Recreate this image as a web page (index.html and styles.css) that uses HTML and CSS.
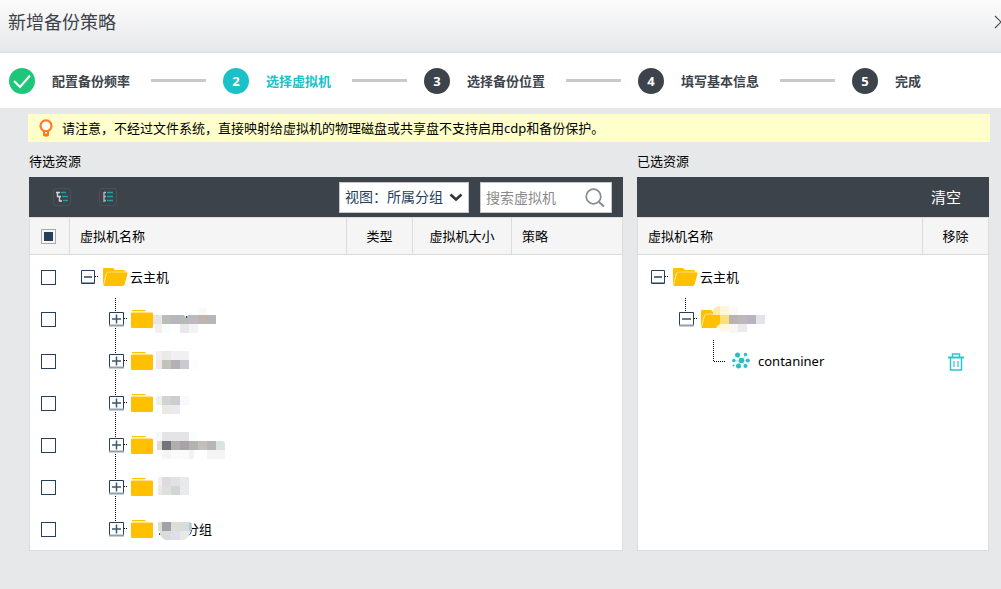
FILE: index.html
```html
<!DOCTYPE html>
<html lang="zh-CN">
<head>
<meta charset="utf-8">
<meta name="viewport" content="width=device-width, initial-scale=1">
<title>新增备份策略</title>
<link rel="stylesheet" href="styles.css">
</head>
<body>
<svg class="defs" aria-hidden="true">
  <symbol id="folder" viewBox="0 0 22 18"><path d="M1 .5h13.500" stroke="#ffc000"/><path d="M1 1.500h14v1H1z" fill="#ffe28a"/><path d="M0 3.500q0-1 1-1h20q1 0 1 1V17q0 1-1 1H1q-1 0-1-1z" fill="#ffc000"/><path d="M1 2.500h20" stroke="#ffe28a"/></symbol>
  <symbol id="folder-open" viewBox="0 0 25 18"><path d="M0 1q0-1 1-1h9l2 2h9q1 0 1 1v2H5q-2 0-2.500 2L.5 17H0z" fill="#ffc000"/><path d="M5.500 4H23q2 0 1.500 2l-3 10.500Q21 18 19.500 18H.5L3.500 6Q4 4 5.500 4z" fill="#ffc000"/><path d="M.7 16 3.300 6Q3.800 4 5.500 4H24" fill="none" stroke="#ffe08a"/></symbol>
  <symbol id="root" viewBox="0 0 17 42"><path d="M.5 14.500h13v13H.5z" fill="#fff" stroke="#24405a"/><path d="M1 26.500h12" stroke="#8fa0ae"/><path d="M3 21h8" stroke="#5c7385" stroke-width="2"/><path d="M14 20.500h3" stroke="#000" stroke-dasharray="1 1"/></symbol>
  <symbol id="box" viewBox="0 0 19 42"><path d="M.5 14.500h14v13H.5z" fill="#fff" stroke="#24405a"/><path d="M0 27.500h15" stroke="#8fa0ae" stroke-width="2"/><path d="M3 21h9" stroke="#3c566b" stroke-width="1.500"/><path d="M15 20.500h4" stroke="#000" stroke-dasharray="1 1"/></symbol>
  <symbol id="plus" viewBox="0 0 19 42"><use href="#box"/><path d="M7.500 16.500v9" stroke="#3c566b" stroke-width="1.500"/><path d="M6.500 0v14" stroke="#000" stroke-dasharray="1 1"/></symbol>
  <symbol id="plus-more" viewBox="0 0 19 42"><use href="#plus"/><path d="M6.500 30v12" stroke="#000" stroke-dasharray="1 1"/></symbol>
  <symbol id="minus" viewBox="0 0 19 42"><use href="#box"/><path d="M6.500 0v14" stroke="#000" stroke-dasharray="1 1"/></symbol>
</svg>

<header class="titlebar">
  <h1>新增备份策略</h1>
  <button class="close" type="button" aria-label="关闭"><svg width="14" height="14" viewBox="0 0 14 14"><path d="m1 1 12 12M13 1 1 13" stroke="#4a4f55" stroke-width="1.200"/></svg></button>
</header>

<ol class="steps">
  <li class="step"><span class="dot done"><svg width="26" height="26" viewBox="0 0 26 26"><path d="m5 13 6 6L21 7.500" fill="none" stroke="#fff" stroke-width="2"/></svg></span><span>配置备份频率</span></li>
  <li class="step current" aria-current="step"><span class="dot">2</span><span>选择虚拟机</span></li>
  <li class="step"><span class="dot">3</span><span>选择备份位置</span></li>
  <li class="step"><span class="dot">4</span><span>填写基本信息</span></li>
  <li class="step"><span class="dot">5</span><span>完成</span></li>
</ol>

<main>
  <p class="notice">
    <svg width="14" height="18" viewBox="0 0 14 18"><circle cx="7" cy="6.800" r="5.500" fill="#fff" stroke="#ff7a1a" stroke-width="2.200"/><path d="M4 11.500h6v5q0 1-3 1.200Q4 17.500 4 16.500z" fill="#ff7a1a"/><path d="M6 13h2v1.500H6z" fill="#fff"/></svg>
    <span>请注意，不经过文件系统，直接映射给虚拟机的物理磁盘或共享盘不支持启用cdp和备份保护。</span>
  </p>

  <div class="panels">
    <section class="panel available">
      <h2>待选资源</h2>
      <div class="toolbar">
        <button class="tool" type="button" aria-label="展开全部"><svg width="12" height="12" viewBox="0 0 12 12"><path d="M0 1.500h4M1.500 1v4.500H5M3.500 5v5H6" fill="none" stroke="#d5d8da" stroke-width="1.400"/><path d="M5 1.500h5M6 5.500h6M7 9.500h5" stroke="#17a5a8" stroke-width="1.500"/></svg></button>
        <button class="tool" type="button" aria-label="收起全部"><svg width="12" height="12" viewBox="0 0 12 12"><path d="M2 1v10M2 1.500h2M2 5.500h2M2 9.500h2" fill="none" stroke="#aeb4b8" stroke-width="1.400"/><path d="M5 1.500h6M5 5.500h6M5 9.500h6" stroke="#17a5a8" stroke-width="1.500"/></svg></button>
        <div class="field view">
          <select aria-label="视图"><option>视图：所属分组</option></select>
          <svg width="14" height="9" viewBox="0 0 14 9"><path d="m1.500 1.500 5.500 5 5.500-5" fill="none" stroke="#333" stroke-width="2.500"/></svg>
        </div>
        <div class="field search">
          <input type="text" placeholder="搜索虚拟机" aria-label="搜索虚拟机">
          <svg width="20" height="20" viewBox="0 0 20 20"><circle cx="8.500" cy="8.500" r="7.300" fill="none" stroke="#858c92" stroke-width="1.700"/><path d="m14 14 5 4.500" stroke="#858c92" stroke-width="2"/></svg>
        </div>
      </div>
      <div class="grid">
        <table>
          <colgroup><col class="c-check"><col class="c-name"><col class="c-type"><col class="c-size"><col></colgroup>
          <thead><tr><th class="check"><input class="partial" type="checkbox" aria-label="全选"></th><th>虚拟机名称</th><th class="mid">类型</th><th class="mid">虚拟机大小</th><th>策略</th></tr></thead>
          <tbody>
            <tr><td class="check"><input type="checkbox" aria-label="选择云主机"></td><td colspan="4"><div class="node"><button type="button" aria-label="收起"><svg width="17" height="42"><use href="#root"/></svg></button><svg class="open" width="25" height="18"><use href="#folder-open"/></svg><span class="name">云主机</span></div></td></tr>
            <tr><td class="check"><input type="checkbox" aria-label="选择分组"></td><td colspan="4"><div class="node child"><button type="button" aria-label="展开"><svg width="19" height="42"><use href="#plus-more"/></svg></button><svg class="closed" width="22" height="18"><use href="#folder"/></svg><svg width="76" height="42"><path d="M0 17h9v9H0z" fill="#e8e6e4"/><path d="M9 17h9v9H9z" fill="#bcbcb6"/><path d="M18 17h9v9h-9z" fill="#b8b4c0"/><path d="M27 17h9v9h-9z" fill="#b4bcb8"/><path d="M36 17h9v9h-9z" fill="#bcbac0"/><path d="M45 17h9v9h-9z" fill="#c0b4ac"/><path d="M54 17h9v9h-9z" fill="#b8b4be"/><path d="M2 26h7v9H2z" fill="#f4efee"/><path d="M9 26h9v9H9z" fill="#f8fdfe"/><path d="M27 26h9v9h-9z" fill="#e8e8ea"/><path d="M36 26h9v9h-9z" fill="#f4f2f5"/><path d="M45 10h9v7h-9z" fill="#fafafa"/><path d="M31 17h4l-2 3z" fill="#fff"/><path d="M33 18h1v2h-1z" fill="#238"/></svg></div></td></tr>
            <tr><td class="check"><input type="checkbox" aria-label="选择分组"></td><td colspan="4"><div class="node child"><button type="button" aria-label="展开"><svg width="19" height="42"><use href="#plus-more"/></svg></button><svg class="closed" width="22" height="18"><use href="#folder"/></svg><svg width="76" height="42"><path d="M3 11h6v9H3z" fill="#f3eff0"/><path d="M9 11h9v9H9z" fill="#eaebe8"/><path d="M18 11h18v9H18z" fill="#f0f0f2"/><path d="M3 20h6v9H3z" fill="#efe8ea"/><path d="M9 20h9v9H9z" fill="#bfc3ba"/><path d="M18 20h9v9h-9z" fill="#b4b0b6"/><path d="M27 20h9v9h-9z" fill="#cbcad2"/><path d="M36 20h9v9h-9z" fill="#fcfefe"/></svg></div></td></tr>
            <tr><td class="check"><input type="checkbox" aria-label="选择分组"></td><td colspan="4"><div class="node child"><button type="button" aria-label="展开"><svg width="19" height="42"><use href="#plus-more"/></svg></button><svg class="closed" width="22" height="18"><use href="#folder"/></svg><svg width="76" height="42"><path d="M3 14h6v9H3z" fill="#efefec"/><path d="M9 14h9v9H9z" fill="#d2d4d3"/><path d="M18 14h9v9h-9z" fill="#cdccce"/><path d="M27 14h9v9h-9z" fill="#f6faff"/><path d="M9 23h9v9H9z" fill="#eae9e4"/><path d="M18 23h9v9h-9z" fill="#ebe9ef"/></svg></div></td></tr>
            <tr><td class="check"><input type="checkbox" aria-label="选择分组"></td><td colspan="4"><div class="node child"><button type="button" aria-label="展开"><svg width="19" height="42"><use href="#plus-more"/></svg></button><svg class="closed" width="22" height="18"><use href="#folder"/></svg><svg width="76" height="42"><path d="M3 8h6v9H3z" fill="#f8f8f8"/><path d="M9 8h27v9H9z" fill="#e4e4e6"/><path d="M36 8h9v9h-9z" fill="#fafdfc"/><path d="M4 17h5v9H4z" fill="#e0d8d2"/><path d="M9 17h9v9H9z" fill="#72757b"/><path d="M18 17h9v9h-9z" fill="#b0adac"/><path d="M27 17h9v9h-9z" fill="#a8a2aa"/><path d="M36 17h9v9h-9z" fill="#b2b4b3"/><path d="M45 17h9v9h-9z" fill="#c5bfba"/><path d="M54 17h9v9h-9z" fill="#b6b6ba"/><path d="M63 17h7l2 2v7h-9z" fill="#dbe3e1"/><path d="M9 26h9v9H9z" fill="#f5f5f5"/><path d="M18 26h18v9H18z" fill="#fafafc"/><path d="M36 26h5v9h-5z" fill="#f2f2f3"/><path d="M54 26h18v9H54z" fill="#f3f4f3"/></svg></div></td></tr>
            <tr><td class="check"><input type="checkbox" aria-label="选择分组"></td><td colspan="4"><div class="node child"><button type="button" aria-label="展开"><svg width="19" height="42"><use href="#plus-more"/></svg></button><svg class="closed" width="22" height="18"><use href="#folder"/></svg><svg width="76" height="42"><path d="M5 11h4v9H5z" fill="#f0eeee"/><path d="M9 11h9v9H9z" fill="#dddbdd"/><path d="M18 11h9v9h-9z" fill="#e2e2e2"/><path d="M27 11h9v9h-9z" fill="#e8e9eb"/><path d="M5 20h4v9H5z" fill="#eee6e3"/><path d="M9 20h9v9H9z" fill="#dde0dd"/><path d="M18 20h9v9h-9z" fill="#d2d5d5"/><path d="M27 20h9v9h-9z" fill="#e9eaec"/></svg></div></td></tr>
            <tr><td class="check"><input type="checkbox" aria-label="选择分组"></td><td colspan="4"><div class="node child"><button type="button" aria-label="展开"><svg width="19" height="42"><use href="#plus"/></svg></button><svg class="closed" width="22" height="18"><use href="#folder"/></svg><svg class="mask" width="39" height="42"><path d="M33 14h3v9l-3 6z" fill="#fff"/><path d="M5 14h4v9H5z" fill="#dfddd4"/><path d="M9 14h9v9H9z" fill="#a0a2a8"/><path d="M18 14h9v9h-9z" fill="#dfdcd6"/><path d="M27 14h9v9h-9z" fill="#d2dedf"/><path d="M36 14h1l2 4v4l-3 1z" fill="#c0c6c5"/><path d="M7 23h11v9h-6q-3-2-5-5z" fill="#d9dcda"/><path d="M18 23h9v9h-9z" fill="#dde0e8"/><path d="M27 23h11q-2 7-7 9h-4z" fill="#e8e8e6"/><path d="M6 25h1v2H6z" fill="#555"/></svg><span class="tail">分组</span></div></td></tr>
          </tbody>
        </table>
      </div>
    </section>

    <section class="panel chosen">
      <h2>已选资源</h2>
      <div class="toolbar"><button class="clear" type="button">清空</button></div>
      <div class="grid">
        <table>
          <colgroup><col><col class="c-remove"></colgroup>
          <thead><tr><th>虚拟机名称</th><th class="mid">移除</th></tr></thead>
          <tbody>
            <tr><td colspan="2"><div class="node right"><button type="button" aria-label="收起"><svg width="17" height="42"><use href="#root"/></svg></button><svg class="open" width="25" height="18"><use href="#folder-open"/></svg><span class="name">云主机</span></div></td></tr>
            <tr><td colspan="2"><div class="node right child"><button type="button" aria-label="收起"><svg width="19" height="42"><use href="#minus"/></svg></button><svg class="closed" width="64" height="42" viewBox="0 0 64 42"><svg y="12" width="25" height="18"><use href="#folder-open"/></svg><path d="M19 8h19v27H20l-4-4 3-5z" fill="#fff"/><path d="M12 12q3-4 7-4v9h-7z" fill="#ffe9a8"/><path d="M19 8h9v9h-9z" fill="#fff6dd"/><path d="M28 8h9v9h-9z" fill="#fafafa"/><path d="M19 17h9v9h-9z" fill="#ffdf7d"/><path d="M28 17h9v9h-9z" fill="#b9b3b2"/><path d="M37 17h9v9h-9z" fill="#bcb8bc"/><path d="M46 17h9v9h-9z" fill="#b8b3c0"/><path d="M55 17h9v9h-9z" fill="#e0e5e8"/><path d="M15 29l4-3h9v7h-9z" fill="#fff8e0"/><path d="M28 26h9v9h-9z" fill="#f8f7f6"/><path d="M37 26h9v8h-9z" fill="#ebebee"/></svg></div></td></tr>
            <tr><td><div class="node leaf"><svg width="12" height="42"><path d="M.5 0v21.500H12" fill="none" stroke="#000" stroke-dasharray="1 1"/></svg><svg class="vm" width="18" height="18" viewBox="0 0 18 18"><path d="m9 9-4-6M9 9l5-6M9 9H1M9 9h8M9 9l-3 6M9 9l5 5" stroke="#9bdfe2"/><g fill="#25bfc6"><circle cx="5.500" cy="3" r="2.500"/><circle cx="13.500" cy="2.500" r="1.700"/><circle cx="9.500" cy="8.500" r="2.700"/><circle cx="15.800" cy="8.500" r="2"/><circle cx="1.800" cy="8.500" r="1.700"/><circle cx="6.500" cy="14" r="2.500"/><circle cx="13.500" cy="14" r="2"/><circle cx="1.500" cy="13.500" r="1"/></g></svg><span>contaniner</span></div></td><td class="mid"><button class="remove" type="button" aria-label="移除 contaniner"><svg width="16" height="18" viewBox="0 0 16 18"><path d="M0 4.500h16" stroke="#2fc5cc" stroke-width="2"/><path d="M4.500 4V1h7v3M2.500 5v12h11V5" fill="none" stroke="#2fc5cc" stroke-width="1.500"/><path d="M6 8v6M10 8v6" stroke="#5fd2d7" stroke-width="1.500"/></svg></button></td></tr>
          </tbody>
        </table>
      </div>
    </section>
  </div>
</main>
</body>
</html>
```

FILE: styles.css
```css
* { box-sizing: border-box; }
body {
  margin: 0;
  min-height: 100vh;
  background: #e7e8ea;
  color: #000;
  font: 13px/20px "Noto Sans", "Noto Sans CJK SC", sans-serif;
}
h1, h2, p, ol { margin: 0; padding: 0; font-weight: 400; }
svg { display: block; flex: none; }
button { padding: 0; border: 0; background: none; font: inherit; color: inherit; cursor: pointer; }
.defs { width: 0; height: 0; position: absolute; }

.titlebar {
  display: flex;
  align-items: center;
  justify-content: space-between;
  height: 53px;
  padding: 0 0 8px 8px;
  overflow: hidden;
  background: linear-gradient(#fcfcfc, #e6e7e9);
  border-bottom: 1px solid #dddee0;
}
.titlebar h1 { font-size: 18px; line-height: 26px; color: #3d434b; }
.close { margin-right: -7px; }

.steps {
  display: flex;
  align-items: center;
  height: 55px;
  padding: 0 9px;
  background: #fff;
  list-style: none;
  font-weight: 700;
  color: #3d434b;
  white-space: nowrap;
}
.step { display: flex; align-items: center; gap: 17px; }
.step:not(:last-child)::after {
  content: "";
  width: 55px;
  height: 3px;
  margin: 0 17px 0 4px;
  background: #c8c9c9;
}
.dot {
  width: 26px;
  height: 26px;
  border-radius: 50%;
  background: #3d434b;
  color: #fff;
  line-height: 26px;
  text-align: center;
}
.dot.done { background: #1fc67a; }
.current { color: #1ac1c8; }
.current .dot { background: #1ac1c8; }

main { padding: 6px 12px 38px 29px; }
.notice {
  display: flex;
  align-items: center;
  gap: 9px;
  min-height: 28px;
  margin: 0 -1px;
  padding: 0 11px;
  background: #ffffcb;
}
.panels { display: flex; gap: 14px; margin-top: 9px; }
.panel { display: flex; flex-direction: column; min-width: 0; }
.available { flex: 594 1 0; }
.chosen { flex: 352 1 0; }
.panel h2 { font-size: 13px; line-height: 20px; margin-bottom: 6px; }

.toolbar {
  display: flex;
  align-items: center;
  height: 40px;
  padding: 0 11px 0 24px;
  background: #3d434b;
}
.tool {
  display: grid;
  place-items: center;
  width: 18px;
  height: 18px;
  margin-right: 28px;
  border: 1px solid #48515a;
  border-radius: 3px;
}
.field { position: relative; height: 31px; }
.field select, .field input {
  width: 100%;
  height: 100%;
  border: 1px solid #c4c8cc;
  border-radius: 0;
  background: #fff;
  color: #24405a;
  font: inherit;
  font-size: 14px;
  appearance: none;
}
.field select { padding: 0 25px 0 5px; }
.field input { padding: 0 30px 0 5px; }
.field input::placeholder { color: #8a8a8a; opacity: 1; }
.field svg { position: absolute; pointer-events: none; }
.view { width: 130px; margin-left: auto; }
.view svg { right: 6px; top: 11px; }
.search { width: 132px; margin-left: 11px; }
.search svg { right: 7px; top: 6px; }
.clear { margin-left: auto; margin-right: 17px; color: #fff; font-size: 15px; }

.grid { flex: 1; background: #fff; border: 1px solid #dbdcde; }
table { width: 100%; border-collapse: separate; border-spacing: 0; table-layout: fixed; }
.c-check { width: 40px; }
.c-name { width: 277px; }
.c-type { width: 66px; }
.c-size { width: 99px; }
.c-remove { width: 65px; }
th {
  height: 37px;
  padding: 0 10px;
  background: #f5f5f5;
  border-right: 1px solid #dbdcde;
  border-bottom: 1px solid #dbdcde;
  font-weight: 400;
  text-align: left;
}
th:last-child { border-right: 0; }
th.mid, td.mid { padding: 0; text-align: center; }
td { height: 42px; padding: 0; }
tbody tr:first-child td { height: 43px; padding-top: 1px; }
th.check, td.check { padding: 0 0 0 11px; }
.check input {
  display: block;
  width: 15px;
  height: 15px;
  margin: 0;
  border: 1px solid #24405a;
  background: #fff;
  appearance: none;
}
.check .partial {
  padding: 2px;
  border-color: #aaa;
  background: #24405a content-box;
}

.node { display: flex; align-items: center; height: 42px; padding-left: 11px; }
.node.child { padding-left: 39px; }
.node.right { padding-left: 13px; }
.node.right.child { padding-left: 41px; }
.node.leaf { padding-left: 75px; }
.open { margin-left: 5px; }
.closed { margin-left: 3px; }
.name { margin-left: 2px; }
.mask { position: relative; z-index: 1; }
.tail { margin-left: -6px; }
.vm { margin: 0 8px 0 7px; }
.remove { display: inline-block; vertical-align: middle; }
```
